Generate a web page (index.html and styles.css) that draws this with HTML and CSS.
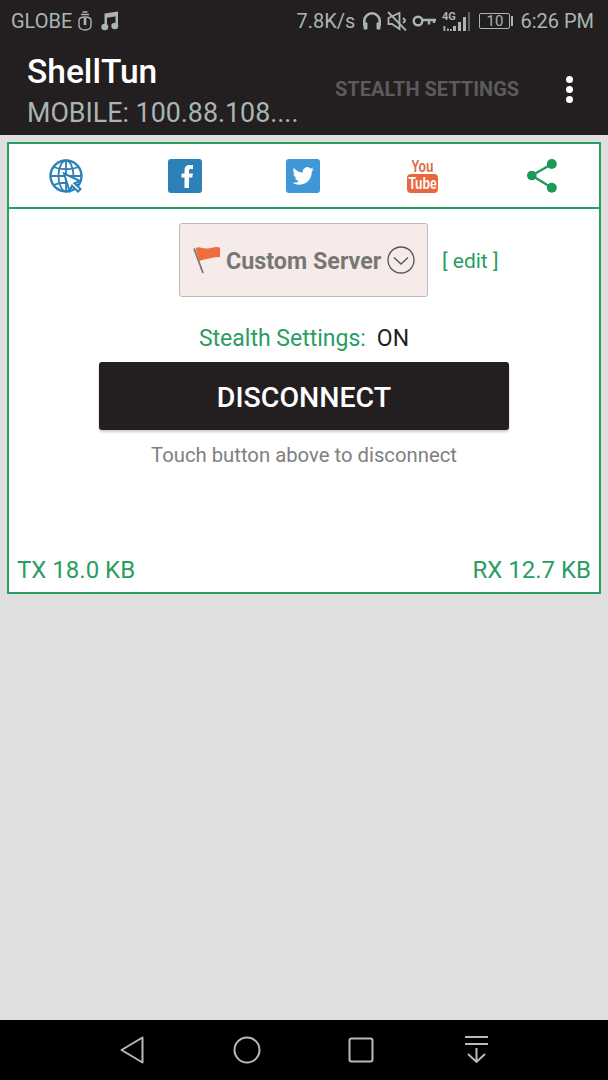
FILE: index.html
```html
<!DOCTYPE html>
<html lang="en">
<head>
  <meta charset="UTF-8" />
  <meta name="viewport" content="width=device-width, initial-scale=1" />
  <title>ShellTun</title>
  <link rel="stylesheet" href="styles.css">
</head>
<body>
  <header class="top">
    <div class="status-bar">
      <div class="status-left">
        <span>GLOBE</span>
        <svg class="ic-usb" width="14" height="20" viewBox="0 0 14 20" fill="none" stroke="#a9b5b0" stroke-width="1.4"><path d="M3 3.500h8M4.500 1h5"/><path d="M1 9.500c0-2 2-3.500 6-3.500s6 1.500 6 3.500v5c0 2.500-2.500 4.500-6 4.500s-6-2-6-4.500z"/><path d="M7 7v7" stroke-width="2.600"/></svg>
        <svg class="ic-music" width="18" height="20" viewBox="0 0 18 20" fill="#a9b5b0"><path d="M3.500 2.500 17 .5v4.500L6 6.700V16H3.500z"/><path d="M14.500 2h2.500v13h-2.500z"/><ellipse cx="3.800" cy="16" rx="3.500" ry="3.300"/><ellipse cx="13.800" cy="15" rx="3.500" ry="3.300"/></svg>
      </div>
      <div class="status-right">
        <span>7.8K/s</span>
        <svg class="ic-phones" width="20" height="20" viewBox="0 0 20 20" fill="none" stroke="#a9b5b0" stroke-width="2.600"><path d="M2.300 15V10a7.700 7.700 0 0 1 15.400 0v5"/><rect x="1.500" y="11.500" width="4" height="7" rx="1" fill="#a9b5b0" stroke="none"/><rect x="14.500" y="11.500" width="4" height="7" rx="1" fill="#a9b5b0" stroke="none"/></svg>
        <svg class="ic-gap5" width="20" height="20" viewBox="0 0 20 20" fill="none" stroke="#a9b5b0" stroke-width="1.800"><path d="M1.500 7v6h3.500l7.500 5V2z"/><path d="M16 7l2.500 2.500M16 12l2.500-2.500"/><path d="M1 1 19 19.500"/></svg>
        <svg class="ic-gap5" width="24" height="14" viewBox="0 0 24 14" fill="none" stroke="#a9b5b0" stroke-width="2.400"><circle cx="6" cy="7" r="4.300"/><path d="M10 6H24M17 6v4.500M22 6v3"/></svg>
        <svg class="ic-signal" width="28" height="20" viewBox="0 0 28 20" fill="#a9b5b0"><text x="0" y="9" class="net-type">4G</text><path d="M1.500 15h1.800v5h-1.800zM5 17.500h1.800V20H5zM8 18h1.800v2H8z"/><rect x="11" y="15" width="3" height="5"/><rect x="16" y="11" width="3" height="9"/><rect x="21" y="6" width="3" height="14"/><rect x="26" y="1" width="2" height="19" opacity="0.450"/></svg>
        <div class="battery"><span class="battery-body">10</span><span class="battery-tip"></span></div>
        <span class="clock">6:26 PM</span>
      </div>
    </div>
    <div class="app-bar">
      <div class="app-titles">
        <div class="app-title">ShellTun</div>
        <div class="app-sub">MOBILE: 100.88.108....</div>
      </div>
      <div class="app-action">STEALTH SETTINGS</div>
      <div class="more"><i></i><i></i><i></i></div>
    </div>
  </header>

  <main class="content">
    <section class="card">
      <div class="social-row">
        <svg width="34" height="34" viewBox="0 0 34 34" fill="none" stroke="#2d80b8" stroke-width="1.800"><circle cx="17" cy="17" r="15.500" stroke-width="2.400"/><ellipse cx="17" cy="17" rx="7.500" ry="15.500"/><path d="M17 1.500v31M4.500 8c7 3 18 3 25 0M1.500 17h31M4.500 26c7-3 18-3 25 0"/><path d="M15 14.500 31 22l-5.500 2.300L31.500 30 29 32.500l-6-5.800-2.500 5.300z" fill="#fff" stroke="#2d80b8" stroke-width="2"/></svg>
        <svg width="34" height="34" viewBox="0 0 34 34"><rect width="34" height="34" rx="3" fill="#2d80b8"/><path d="M16.500 29V18.500h-3v-4h3V11c0-3.300 2-5 5-5h3.500v4h-2c-1.500 0-2 .6-2 2v2.500h3.900l-.6 4h-3.300V29z" fill="#fff"/></svg>
        <svg width="34" height="34" viewBox="0 0 34 34"><rect width="34" height="34" rx="3" fill="#3f97d8"/><path transform="translate(2.400 2.200) scale(.85)" d="M30 9.500c-.9.400-1.900.700-3 .800 1.100-.700 1.900-1.700 2.300-2.900-1 .600-2.100 1-3.300 1.300a5.200 5.200 0 0 0-8.900 4.700C12.800 13.200 9 11.200 6.400 8c-1.400 2.400-.7 5.300 1.600 6.900-.8 0-1.600-.2-2.300-.6 0 2.500 1.700 4.700 4.200 5.200-.8.200-1.600.2-2.300.1.700 2.100 2.600 3.600 4.900 3.600A10.500 10.500 0 0 1 4.700 25.400c2.300 1.500 5 2.300 8 2.300 9.700 0 15.100-8.200 14.800-15.500 1-.7 1.900-1.700 2.500-2.700z" fill="#fff"/></svg>
        <div class="yt">
          <div class="yt-you"><span>You</span></div>
          <div class="yt-tube"><span>Tube</span></div>
        </div>
        <svg width="30" height="34" viewBox="0 0 30 34" fill="#1d9a57"><circle cx="4.800" cy="16.500" r="4.800"/><circle cx="24.800" cy="5" r="5"/><circle cx="24.800" cy="28.800" r="5"/><path d="M4.800 16.500 24.800 5M4.800 16.500l20 12.300" stroke="#1d9a57" stroke-width="2.400"/></svg>
      </div>

      <div class="card-body">
        <div class="server-row">
          <div class="server-btn">
            <svg width="30" height="30" viewBox="0 0 30 30"><path d="M2 3.500 11 28" stroke="#777" stroke-width="1.800"/><path d="M3.500 3C8 1 10 4 15 3.500 20 3 24 1 28 2.500V12C22 12 14 14 7 16z" fill="#ef6d3d"/></svg>
            <span class="server-name">Custom Server</span>
            <svg class="chevron" width="28" height="28" viewBox="0 0 28 28" fill="none" stroke="#555" stroke-width="1.300"><circle cx="14" cy="14" r="13"/><path d="M7 11.500l7 6.500 7-6.500"/></svg>
          </div>
          <a class="edit-link" href="#">[ edit ]</a>
        </div>
        <div class="stealth-line">Stealth Settings:<span class="stealth-val">ON</span></div>
        <button class="disconnect-btn">DISCONNECT</button>
        <div class="hint">Touch button above to disconnect</div>
        <div class="traffic">
          <span>TX 18.0 KB</span>
          <span>RX 12.7 KB</span>
        </div>
      </div>
    </section>
  </main>

  <nav class="nav-bar">
    <svg width="28" height="30" viewBox="0 0 28 30" fill="none" stroke="#b4bdb9" stroke-width="2" stroke-linejoin="round"><path d="M23.500 2.500v25L2.500 15z"/></svg>
    <svg width="30" height="30" viewBox="0 0 30 30" fill="none" stroke="#b4bdb9" stroke-width="2"><circle cx="15" cy="15" r="12.500"/></svg>
    <svg width="28" height="28" viewBox="0 0 28 28" fill="none" stroke="#b4bdb9" stroke-width="2"><rect x="2.500" y="2.500" width="23" height="23" rx="2"/></svg>
    <svg class="nav-drop" width="26" height="30" viewBox="0 0 26 30" fill="none" stroke="#b4bdb9" stroke-width="2"><path d="M1 2h23M1 9h23M12.500 13v14M4 19l8.500 8 8.500-8"/></svg>
  </nav>
</body>
</html>
```

FILE: styles.css
```css
body {
  margin: 0;
  width: 608px;
  height: 1080px;
  display: flex;
  flex-direction: column;
  font-family: 'Roboto', sans-serif;
  background: #dfdfdf;
  overflow: hidden;
}

.top {
  background: #231f20;
  height: 135px;
  flex: none;
}

.status-bar {
  height: 42px;
  display: flex;
  justify-content: space-between;
  align-items: center;
  padding: 0 14px 0 11px;
  color: #a9b5b0;
  font-size: 20px;
}

.status-left,
.status-right {
  display: flex;
  align-items: center;
}

.ic-usb {
  margin-left: 6px;
}

.ic-music {
  margin-left: 9px;
}

.ic-phones {
  margin-left: 7px;
}

.ic-gap5 {
  margin-left: 5px;
}

.ic-signal {
  margin-left: 6px;
}

.net-type {
  font-size: 11px;
  font-weight: 700;
  fill: #a9b5b0;
}

.battery {
  display: flex;
  align-items: center;
  margin-left: 9px;
}

.battery-body {
  width: 31px;
  height: 16px;
  box-sizing: border-box;
  border: 1px solid #a9b5b0;
  border-radius: 2px;
  font-size: 15px;
  line-height: 14px;
  text-align: center;
}

.battery-tip {
  width: 2px;
  height: 10px;
  margin-left: 1px;
  background: #a9b5b0;
}

.clock {
  margin-left: 7px;
}

.app-bar {
  display: flex;
  align-items: center;
  padding: 10px 0 0 27px;
}

.app-titles {
  width: 308px;
}

.app-title {
  color: #fff;
  font-size: 33.500px;
  font-weight: 500;
  line-height: 40px;
}

.app-sub {
  color: #a9b5b0;
  font-size: 26.800px;
  line-height: 42px;
  white-space: nowrap;
}

.app-action {
  margin-bottom: 8px;
  color: #5c5a5a;
  font-size: 20px;
  font-weight: 700;
  white-space: nowrap;
}

.more {
  display: flex;
  flex-direction: column;
  gap: 3px;
  margin: 0 0 8px 47px;
}

.more i {
  width: 7px;
  height: 7px;
  border-radius: 50%;
  background: #fff;
}

.content {
  flex: 1;
  padding: 7px;
}

.card {
  height: 452px;
  box-sizing: border-box;
  border: 2px solid #2a9d63;
  background: #fff;
  display: flex;
  flex-direction: column;
}

.social-row {
  display: grid;
  grid-template-columns: 119px 118px 121px 120px 30px;
  align-items: center;
  height: 63px;
  flex: none;
  padding: 0 0 0 40px;
  border-bottom: 2px solid #2a9d63;
}

.yt {
  width: 31px;
}

.yt-you,
.yt-tube {
  display: flex;
  justify-content: center;
  font-family: 'Liberation Sans', sans-serif;
  font-size: 17px;
  font-weight: 700;
}

.yt-you span,
.yt-tube span {
  display: block;
  flex: none;
  transform: scaleX(0.72);
}

.yt-you {
  color: #d96c4a;
  line-height: 15px;
}

.yt-tube {
  background: #e8683d;
  color: #fff;
  border-radius: 4px;
  line-height: 19px;
}

.card-body {
  flex: 1;
  display: flex;
  flex-direction: column;
  align-items: center;
}

.server-row {
  display: flex;
  align-items: center;
  margin-top: 14px;
  padding-left: 170px;
  align-self: flex-start;
}

.server-btn {
  width: 249px;
  height: 74px;
  box-sizing: border-box;
  display: flex;
  align-items: center;
  padding-left: 12px;
  background: #f7ebe9;
  border: 1px solid #bdbdbd;
  border-radius: 3px;
}

.server-name {
  margin: 2px 0 0 4px;
  color: #777;
  font-size: 23.300px;
  font-weight: 700;
  white-space: nowrap;
}

.chevron {
  margin-left: 6px;
}

.edit-link {
  margin: 2px 0 0 14px;
  color: #2a9d63;
  font-size: 21px;
  text-decoration: none;
}

.stealth-line {
  margin-top: 28px;
  color: #2a9d63;
  font-size: 23px;
  line-height: 28px;
}

.stealth-val {
  margin-left: 11px;
  color: #231f20;
}

.disconnect-btn {
  display: block;
  width: 410px;
  height: 68px;
  margin-top: 9px;
  padding: 2px 0 0;
  border: none;
  border-radius: 3px;
  background: #231f20;
  color: #fff;
  font-family: inherit;
  font-size: 28.500px;
  font-weight: 500;
  box-shadow: 0 2px 3px rgba(0, 0, 0, 0.2);
}

.hint {
  margin-top: 12px;
  color: #808080;
  font-size: 20.300px;
  line-height: 26px;
}

.traffic {
  align-self: stretch;
  margin-top: auto;
  display: flex;
  justify-content: space-between;
  padding: 0 8px 7px 8px;
  color: #2a9d63;
  font-size: 24px;
  line-height: 30px;
}

.nav-bar {
  height: 60px;
  flex: none;
  background: #000;
  display: flex;
  align-items: center;
  padding-left: 119px;
  gap: 85px;
}

.nav-drop {
  margin-left: 4px;
}
```
